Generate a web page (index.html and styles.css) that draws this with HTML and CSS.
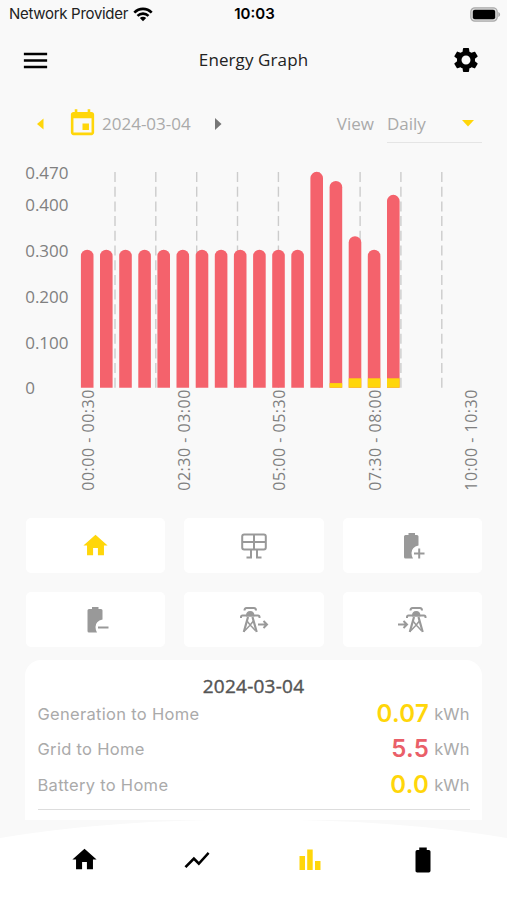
FILE: index.html
```html
<!DOCTYPE html>
<html lang="en">
<head>
    <meta charset="UTF-8">
    <meta name="viewport" content="width=device-width, initial-scale=1.0">
    <title>Energy Graph</title>
    <link rel="stylesheet" href="styles.css">
</head>
<body>
    <div class="app">
        <div class="status">
            <div class="provider">
                <span class="provider-name">Network Provider</span>
                <svg width="20" height="15" viewBox="0 0 20 15" fill="none" stroke="#000" stroke-width="2.6">
                    <path d="M1.3 5.6C6.2.6 13.8.6 18.7 5.6M4.5 8.9c3.1-3 7.9-3 11 0"/>
                    <path d="M10 14.2L6.8 11c1.8-1.6 4.6-1.6 6.4 0z" fill="#000" stroke="none"/>
                </svg>
            </div>
            <span class="time">10:03</span>
            <svg class="battery" width="31" height="15" viewBox="0 0 31 15">
                <rect x=".8" y=".8" width="26.4" height="13.4" rx="4" fill="#ddd" stroke="#aaa" stroke-width="1.2"/>
                <rect x="2.8" y="2.8" width="22.4" height="9.4" rx="2"/>
                <path d="M28.3 5v5c2.4-.8 2.4-4.2 0-5z" fill="#aaa"/>
            </svg>
        </div>

        <header class="header">
            <svg width="31" height="31" viewBox="0 0 24 24"><path d="M3 18h18v-2H3v2zm0-5h18v-2H3v2zm0-7v2h18V6H3z"/></svg>
            <h1>Energy Graph</h1>
            <svg width="30" height="30" viewBox="0 0 24 24"><path d="M19.14 12.94c.04-.3.06-.61.06-.94 0-.32-.02-.64-.07-.94l2.03-1.58c.18-.14.23-.41.12-.61l-1.92-3.32c-.12-.22-.37-.29-.59-.22l-2.39.96c-.5-.38-1.03-.7-1.62-.94l-.36-2.54c-.04-.24-.24-.41-.48-.41h-3.84c-.24 0-.43.17-.47.41l-.36 2.54c-.59.24-1.13.57-1.62.94l-2.39-.96c-.22-.08-.47 0-.59.22L2.74 8.87c-.12.21-.08.47.12.61l2.03 1.58c-.05.3-.09.63-.09.94s.02.64.07.94l-2.03 1.58c-.18.14-.23.41-.12.61l1.92 3.32c.12.22.37.29.59.22l2.39-.96c.5.38 1.03.7 1.62.94l.36 2.54c.05.24.24.41.48.41h3.84c.24 0 .44-.17.47-.41l.36-2.54c.59-.24 1.13-.56 1.62-.94l2.39.96c.22.08.47 0 .59-.22l1.92-3.32c.12-.22.07-.47-.12-.61l-2.01-1.58zM12 15.6c-1.98 0-3.6-1.62-3.6-3.6s1.62-3.6 3.6-3.6 3.6 1.62 3.6 3.6-1.62 3.6-3.6 3.6z"/></svg>
        </header>

        <div class="filter">
            <svg class="prev" width="7" height="12" viewBox="0 0 7 12"><path d="M6.5.5v11L0 6z"/></svg>
            <svg class="calendar" width="31" height="31" viewBox="0 0 24 24"><path d="M17 12h-5v5h5v-5zM16 1v2H8V1H6v2H5c-1.11 0-1.99.9-1.99 2L3 19c0 1.1.89 2 2 2h14c1.1 0 2-.9 2-2V5c0-1.1-.9-2-2-2h-1V1h-2zm3 18H5V8h14v11z"/></svg>
            <span class="date">2024-03-04</span>
            <svg class="next" width="7" height="12" viewBox="0 0 7 12"><path d="M0 0v12l6.5-6z"/></svg>
            <span class="view-label">View</span>
            <div class="select">
                <span>Daily</span>
                <svg width="12" height="7" viewBox="0 0 12 7"><path d="M0 0h12L6 6.5z"/></svg>
            </div>
        </div>

        <!-- plot: baseline y=388, 460px per kWh, bars every 19.13px -->
        <svg class="chart" width="507" height="346" viewBox="0 158 507 346">
            <g class="grid">
                <path d="M115 172V388M155.8 172V388M196.7 172V388M237.5 172V388M278.4 172V388M319.2 172V388M360.1 172V388M400.9 172V388M441.8 172V388"/>
            </g>
            <g class="y-axis">
                <text x="25.2" y="179">0.470</text>
                <text x="25.2" y="210.6">0.400</text>
                <text x="25.2" y="256.6">0.300</text>
                <text x="25.2" y="302.6">0.200</text>
                <text x="25.2" y="348.6">0.100</text>
                <text x="25.2" y="394.3">0</text>
            </g>
            <defs>
                <path id="bar" d="M0 387.7V256a6.3 6.3 0 0 1 12.6 0V387.7z"/>
            </defs>
            <g class="bars">
                <use href="#bar" x="80.9"/>
                <use href="#bar" x="100"/>
                <use href="#bar" x="119.2"/>
                <use href="#bar" x="138.3"/>
                <use href="#bar" x="157.4"/>
                <use href="#bar" x="176.5"/>
                <use href="#bar" x="195.7"/>
                <use href="#bar" x="214.8"/>
                <use href="#bar" x="233.9"/>
                <use href="#bar" x="253.1"/>
                <use href="#bar" x="272.2"/>
                <use href="#bar" x="291.3"/>
                <path d="M310.4 387.7V178.1a6.3 6.3 0 0 1 12.6 0V387.7z"/>
                <path d="M329.6 387.7V187.3a6.3 6.3 0 0 1 12.6 0V387.7z"/>
                <path d="M348.7 387.7V242.5a6.3 6.3 0 0 1 12.6 0V387.7z"/>
                <use href="#bar" x="367.8"/>
                <path d="M387 387.7V201.1a6.3 6.3 0 0 1 12.6 0V387.7z"/>
            </g>
            <g class="solar">
                <rect x="329.6" y="383.1" width="12.6" height="4.6"/>
                <rect x="348.7" y="378.3" width="12.6" height="9.4"/>
                <rect x="367.8" y="378.3" width="12.6" height="9.4"/>
                <rect x="387" y="378.3" width="12.6" height="9.4"/>
            </g>
            <g class="x-axis">
                <text transform="translate(94 490.7) rotate(-90)" textLength="101">00:00 - 00:30</text>
                <text transform="translate(189.6 490.7) rotate(-90)" textLength="101">02:30 - 03:00</text>
                <text transform="translate(285.3 490.7) rotate(-90)" textLength="101">05:00 - 05:30</text>
                <text transform="translate(380.9 490.7) rotate(-90)" textLength="101">07:30 - 08:00</text>
                <text transform="translate(476.6 490.7) rotate(-90)" textLength="101">10:00 - 10:30</text>
            </g>
        </svg>

        <div class="sources">
            <div class="source active">
                <svg width="29" height="29" viewBox="0 0 24 24"><path d="M10 20v-6h4v6h5v-8h3L12 3 2 12h3v8z"/></svg>
            </div>
            <div class="source">
                <svg class="line" width="30" height="30" viewBox="0 0 30 30"><rect x="3.2" y="3.5" width="23.6" height="15" rx="2"/><path d="M15 3.5v15M3 11h24M12 18.5v8M18 18.5v8M7.500 26.500H13M17 26.500h5.500"/></svg>
            </div>
            <div class="source">
                <svg width="30" height="30" viewBox="0 0 30 30"><path d="M11.500 2h6.500v2h2q1.500 0 1.500 1.500V14.500q-7 1.500-7 7.500 0 3 1.500 5.500H8.500q-1.500 0-1.500-1.500V5.500Q7 4 8.500 4h3z"/><path class="line" d="M17 22.500h10.500M22.200 17.500v10"/></svg>
            </div>
            <div class="source">
                <svg width="30" height="30" viewBox="0 0 30 30"><path d="M11 2h6.500v2H20q1.500 0 1.500 1.500V14.500q-7 1.500-7 7.500 0 3 1.500 5.500H8q-1.500 0-1.500-1.500V5.500Q6.500 4 8 4h3z"/><path class="line" d="M17 22.500h10.500"/></svg>
            </div>
            <div class="source">
                <svg class="line" width="30" height="30" viewBox="0 0 30 30">
                    <path d="M5.500 5.500Q5.500 3 7.500 3h7.500q2 0 2 2.500M2 13v-1q0-1.500 1.500-1.500h15.500q1.500 0 1.500 1.500v1"/>
                    <path d="M8 10.500q0-3.500 3.200-3.500t3.200 3.500z" fill="#999"/>
                    <path d="M9 12L4.800 27M13.500 12l4.200 15" stroke-width="2.200"/>
                    <path d="M8 16l3.200 4 3.200-4M6 25.500l5.200-5.500 5.200 5.500" stroke-width="1.500"/>
                    <path d="M19 19.500h8.500M24.500 16l3.500 3.500-3.500 3.500"/>
                </svg>
            </div>
            <div class="source">
                <svg class="line" width="30" height="30" viewBox="0 0 30 30">
                    <path d="M13.500 5.500q0-2.500 2-2.500h7.500q2 0 2 2.500M10 13v-1q0-1.500 1.500-1.500h15.500q1.500 0 1.500 1.500v1"/>
                    <path d="M16 10.500q0-3.500 3.200-3.500t3.200 3.500z" fill="#999"/>
                    <path d="M17 12l-4.200 15M21.500 12l4.200 15" stroke-width="2.200"/>
                    <path d="M16 16l3.200 4 3.200-4M14 25.500l5.200-5.500 5.200 5.500" stroke-width="1.500"/>
                    <path d="M1 19.500h8.500M6.500 16L10 19.500 6.500 23"/>
                </svg>
            </div>
        </div>

        <div class="summary">
            <h2>2024-03-04</h2>
            <div class="row"><span class="name">Generation to Home</span><b>0.07</b><span class="unit">kWh</span></div>
            <div class="row"><span class="name">Grid to Home</span><b class="red">5.5</b><span class="unit">kWh</span></div>
            <div class="row"><span class="name">Battery to Home</span><b>0.0</b><span class="unit">kWh</span></div>
        </div>

        <nav class="nav">
            <svg class="curve" width="507" height="81" viewBox="0 0 507 81"><path d="M0 19Q110 .5 253.5.5T507 19V81H0z"/></svg>
            <div class="tabs">
                <svg width="29" height="29" viewBox="0 0 24 24"><path d="M10 20v-6h4v6h5v-8h3L12 3 2 12h3v8z"/></svg>
                <svg width="30" height="30" viewBox="0 0 24 24"><path d="M3.5 18.49l6-6.01 4 4L22 6.92l-1.41-1.41-7.09 7.97-4-4L2 16.99z"/></svg>
                <svg class="current" width="30" height="30" viewBox="0 0 30 30"><path d="M4.500 11H10V25H4.500zM12.200 4.500h5.500V25h-5.500zM20 16h5.500v9H20z"/></svg>
                <svg width="30" height="30" viewBox="0 0 24 24"><path d="M16.67 4H15V2H9v2H7.330A1.330 1.330 0 0 0 6 5.330v15.340C6 21.400 6.600 22 7.330 22h9.340A1.330 1.330 0 0 0 18 20.670V5.330C18 4.600 17.400 4 16.670 4z"/></svg>
            </div>
        </nav>
    </div>
</body>
</html>
```
FILE: styles.css
```css
*{
    box-sizing: border-box;
}
body{
    margin: 0;
    background: #f9f9f9;
    font-family: "Open Sans", sans-serif;
}
svg{
    display: block;
    flex: none;
}
.app{
    display: flex;
    flex-direction: column;
    width: 507px;
    height: 900px;
    overflow: hidden;
}
.status{
    display: grid;
    grid-template-columns: 1fr auto 1fr;
    align-items: center;
    height: 28px;
    padding: 0 7px 0 9px;
    font: 15px/28px Inter, sans-serif;
}
.provider{
    display: flex;
    align-items: center;
    gap: 5px;
}
.provider-name{
    letter-spacing: -.3px;
    color: #222;
}
.time{
    font-weight: 600;
}
.battery{
    justify-self: end;
    margin-right: -1px;
}
.header{
    display: flex;
    align-items: center;
    justify-content: space-between;
    height: 64px;
    padding: 0 26px 0 20px;
}
.header h1{
    margin: 0 0 1px 5px;
    font-size: 17px;
    font-weight: 400;
    letter-spacing: .1px;
    color: #222;
}
.filter{
    display: flex;
    align-items: center;
    height: 66px;
    padding: 0 25px 3px 37px;
    font-size: 17px;
    color: #aaa;
}
.prev,
.calendar,
.select svg{
    fill: #ffd60a;
}
.calendar{
    margin: 0 0 1px 23px;
}
.date{
    margin-left: 4px;
}
.next{
    margin-left: 24px;
    fill: #777;
}
.view-label{
    margin-left: auto;
}
.select{
    display: flex;
    align-items: center;
    justify-content: space-between;
    width: 95px;
    height: 38px;
    margin-left: 13px;
    padding-right: 8px;
    border-bottom: 1px solid #e5e5e5;
}
.chart{
    font-size: 17px;
}
.grid{
    fill: none;
    stroke: #ccc;
    stroke-width: 1.4;
    stroke-dasharray: 10 4.7;
}
.y-axis{
    fill: #808080;
}
.x-axis{
    fill: #808080;
    font-size: 16px;
}
.bars{
    fill: #f4626c;
}
.solar{
    fill: #ffd60a;
}
.sources{
    display: grid;
    grid-template-columns: repeat(3, 1fr);
    grid-auto-rows: 55px;
    gap: 19px;
    padding: 14px 25px 0 26px;
}
.source{
    display: flex;
    align-items: center;
    justify-content: center;
    border-radius: 5px;
    background: #fff;
    fill: #999;
}
.active{
    fill: #ffd60a;
}
.line{
    fill: none;
    stroke: #999;
    stroke-width: 2;
}
.summary{
    height: 160px;
    margin: 13px 25px 0;
    padding: 14px 12.5px 0;
    border-radius: 16px 16px 0 0;
    background: #fff;
}
.summary h2{
    margin: 0;
    font-size: 19px;
    line-height: 24px;
    font-weight: 500;
    letter-spacing: .25px;
    text-align: center;
    color: #555;
    -webkit-text-stroke: .4px #555;
}
.row{
    display: flex;
    align-items: center;
    height: 35.5px;
    padding-bottom: 4px;
    font: 16.5px/32px Inter, sans-serif;
    color: #aaa;
}
.row:last-child{
    height: 41px;
    padding-bottom: 9px;
    border-bottom: 1px solid #ddd;
}
.name{
    flex: 1;
    letter-spacing: .3px;
}
.row b{
    font-size: 24px;
    font-weight: 600;
    letter-spacing: .3px;
    color: #ffd60a;
}
.row .red{
    color: #ea5f69;
}
.unit{
    margin-left: 5px;
    letter-spacing: .1px;
}
.nav{
    display: grid;
    height: 81px;
    margin-top: -1px;
}
.curve,
.tabs{
    grid-area: 1 / 1;
}
.curve{
    fill: #fff;
}
.tabs{
    display: grid;
    grid-template-columns: repeat(4, 1fr);
    align-items: center;
    justify-items: center;
    height: 81px;
    padding: 0 28px;
}
.current{
    fill: #ffd60a;
}
```
